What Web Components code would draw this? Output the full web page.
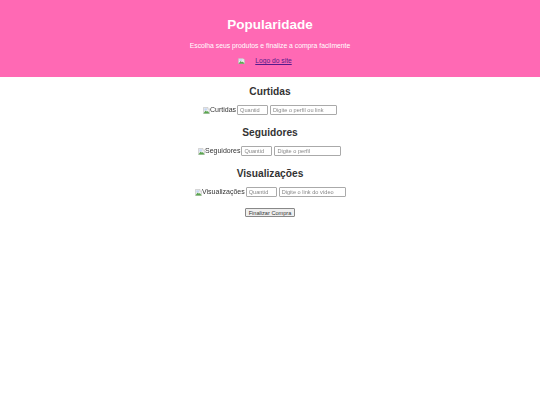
<!DOCTYPE html>
<html lang="pt"><head><meta charset="utf-8"><title>Popularidade</title>
<style>
html,body{margin:0;padding:0;background:#fff;font-family:"Liberation Sans",Arial,sans-serif;color:#333}
</style></head><body>
<site-header heading="Popularidade" tagline="Escolha seus produtos e finalize a compra facilmente" logo="Logo do site"></site-header>
<main-content>
<product-section heading="Curtidas" ph2="Digite o perfil ou link"></product-section>
<product-section heading="Seguidores" ph2="Digite o perfil"></product-section>
<product-section heading="Visualizações" ph2="Digite o link do vídeo"></product-section>
<checkout-button>Finalizar Compra</checkout-button>
</main-content>
<script>
const brokenIcon=(w,h)=>`<svg width="${w}" height="${h}" viewBox="0 0 16 16" preserveAspectRatio="none" style="flex:none"><path d="M1 1h10l4 4v10H1z" fill="#f1f1f1" stroke="#b5b5b5" stroke-width="1.2"/><path d="M1 15l5-7 3 3 2-2 4 6z" fill="#5aa54f"/><path d="M3 3h6v5H3z" fill="#c4d6f4"/><path d="M11 1v4h4" fill="#fff" stroke="#b5b5b5"/></svg>`;
class SiteHeader extends HTMLElement{connectedCallback(){this.attachShadow({mode:"open"}).innerHTML=`<style>
:host{display:flex;flex-direction:column;align-items:center;height:77px;box-sizing:border-box;background:#ff69b4;color:#fff;padding-top:16px}
h1{margin:0;font-size:13.5px;line-height:18px;font-weight:700}
p{margin:7px 0 0;font-size:6.8px;line-height:9px}
.logo{display:flex;align-items:center;margin:6px 10px 0 0;height:9px;font-size:6.7px;gap:10px}
a{color:#551a8b;text-decoration:underline}
</style><h1>${this.getAttribute("heading")}</h1><p>${this.getAttribute("tagline")}</p><div class="logo">${brokenIcon(7,6)}<a href="#">${this.getAttribute("logo")}</a></div>`}}
class MainContent extends HTMLElement{connectedCallback(){this.attachShadow({mode:"open"}).innerHTML=`<style>
:host{display:flex;flex-direction:column;align-items:center;padding-top:8px}
</style><slot></slot>`}}
class ProductSection extends HTMLElement{connectedCallback(){const h=this.getAttribute("heading");this.attachShadow({mode:"open"}).innerHTML=`<style>
:host{display:flex;flex-direction:column;align-items:center;height:41px}
h2{margin:0;font-size:10.2px;line-height:14px;font-weight:700;color:#333}
.row{display:flex;align-items:center;margin-top:6px;font-size:7px;line-height:10px;color:#333;will-change:transform}
input{box-sizing:border-box;height:10px;padding:0 2px;margin:0;border:.5px solid #aaa;border-radius:1px;font:5.6px "Liberation Sans",Arial,sans-serif;background:#fff;outline:none}
input::placeholder{color:#888}
.q{width:31px;margin:0 2px 0 1px}.t{width:67px}
</style><h2>${h}</h2><div class="row">${brokenIcon(7,7)}<span>${h}</span><input class="q" placeholder="Quantid"><input class="t" placeholder="${this.getAttribute("ph2")}"></div>`}}
class CheckoutButton extends HTMLElement{connectedCallback(){this.attachShadow({mode:"open"}).innerHTML=`<style>
:host{display:block}
button{display:block;box-sizing:border-box;width:50px;height:9px;padding:0;border:.5px solid #888;border-radius:1px;background:#efefef;color:#333;font:5.6px "Liberation Sans",Arial,sans-serif}
</style><button><slot></slot></button>`}}
customElements.define("site-header",SiteHeader);customElements.define("main-content",MainContent);customElements.define("product-section",ProductSection);customElements.define("checkout-button",CheckoutButton);
</script>
</body></html>
